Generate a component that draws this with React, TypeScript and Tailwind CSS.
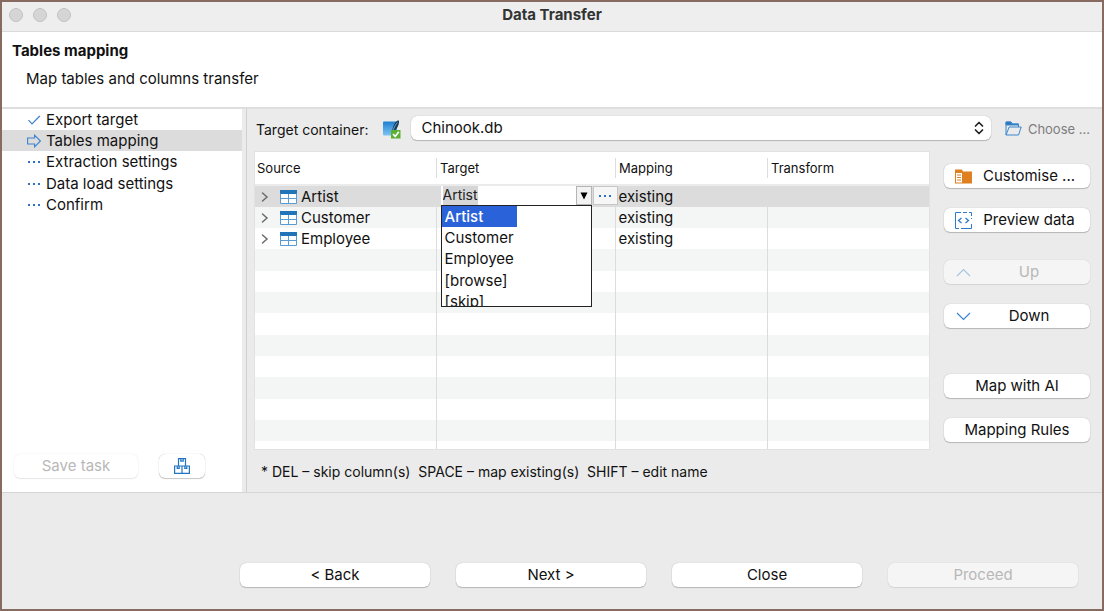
import { useEffect, useRef, type ReactNode } from "react";
import clsx from "clsx";

const steps = [
  { label: "Export target", state: "done" },
  { label: "Tables mapping", state: "current" },
  { label: "Extraction settings", state: "pending" },
  { label: "Data load settings", state: "pending" },
  { label: "Confirm", state: "pending" },
];

const tables = ["Artist", "Customer", "Employee"];
const options = ["Artist", "Customer", "Employee", "[browse]", "[skip]"];
const emptyRows = Array.from({ length: 9 }, (_, i) => i);

function CheckIcon() {
  return (
    <svg width="14" height="14" viewBox="0 0 14 14" fill="none" stroke="#3b82cf" strokeWidth="1.2" aria-hidden="true">
      <path d="M1.5 7.2 5 10.8 12.8 3" />
    </svg>
  );
}

function ArrowIcon() {
  return (
    <svg width="14" height="14" viewBox="0 0 14 14" fill="none" stroke="#3b82cf" strokeWidth="1.1" aria-hidden="true">
      <path d="M.6 4h7V1.2L13.4 7l-5.8 5.8V10h-7z" />
    </svg>
  );
}

function DotsIcon() {
  return (
    <svg width="14" height="14" viewBox="0 0 14 14" fill="#2b72c4" aria-hidden="true">
      <path d="M1 6h2v2H1zM6 6h2v2H6zM11 6h2v2h-2z" />
    </svg>
  );
}

function TableIcon() {
  return (
    <svg width="17" height="14" viewBox="0 0 17 14" aria-hidden="true">
      <path fill="#fff" d="M.5.5h16v13H.5z" />
      <path fill="#2274b9" d="M0 0h17v4H0z" />
      <path fill="none" stroke="#5b9bd3" d="M.5 3.5v10h16v-10M8.500 4v9.500M.5 8.500h16" />
    </svg>
  );
}

function ChevronRight() {
  return (
    <svg width="8" height="12" viewBox="0 0 8 12" fill="none" stroke="#6b6b6b" strokeWidth="1.5" strokeLinecap="round" aria-hidden="true">
      <path d="m1.500 2 4.500 4-4.500 4" />
    </svg>
  );
}

function SqliteIcon() {
  return (
    <svg width="19" height="19" viewBox="0 0 19 19" aria-hidden="true">
      <defs>
        <linearGradient id="db" x1="0" y1="0" x2="0" y2="1">
          <stop offset="0" stopColor="#1c7fd0" />
          <stop offset="1" stopColor="#7fc4f3" />
        </linearGradient>
      </defs>
      <rect x="1" y="1.500" width="14" height="14" rx="1" fill="url(#db)" />
      <path fill="#173a58" d="M16.500.3c1 .7.600 3.700-.7 6.200-1.200 2.400-2.900 4.300-4.500 5.200l-.8 4h-1c.2-5.200 2.300-14 7-15.400z" />
      <path fill="none" stroke="#9bd0f2" strokeWidth=".7" d="M15.500 2.500c-2.200 2.200-4 6-4.800 9.500" />
      <rect x="9" y="10" width="9.500" height="8.500" fill="#5ab031" />
      <path fill="none" stroke="#fff" strokeWidth="1.700" d="m11 14 2.200 2.400 3.600-4.600" />
    </svg>
  );
}

function FolderOpenIcon() {
  return (
    <svg width="17" height="15" viewBox="0 0 17 15" fill="none" stroke="#3b86cc" aria-hidden="true">
      <path d="M1 14V1h5l1 2h6.500v3M1 14l3.200-8h12l-2.700 8z" />
      <path fill="#2a76bd" d="M1 1h5l1 2h6.500v1H1z" />
    </svg>
  );
}

function CustomiseIcon() {
  return (
    <svg width="17" height="15" viewBox="0 0 17 15" aria-hidden="true">
      <path fill="#de801f" d="M0 .5h7l1 2h9v12H0z" />
      <path fill="#fff" d="M1 4h6v9.500H1z" />
      <path stroke="#de801f" d="M2 6h4M2 8.500h4M2 11h4" />
    </svg>
  );
}

function PreviewIcon() {
  return (
    <svg width="17" height="17" viewBox="0 0 17 17" fill="none" stroke="#2f7ac6" aria-hidden="true">
      <path d="M6 .5H.5v16H4M8 .5h4M14 .5h2.500V4M6 16.500h10.500V12M16.500 6v1" />
      <path strokeWidth="1.300" d="M6.500 6 3.500 8.500l3 2.500M10.500 6l3 2.500-3 2.500" />
    </svg>
  );
}

function ChevronIcon({ up = false }: { up?: boolean }) {
  return (
    <svg width="15" height="9" viewBox="0 0 15 9" fill="none" stroke={up ? "#a9c4e0" : "#3b82cf"} strokeWidth="1.2" aria-hidden="true">
      <path d={up ? "M1 8l6.500-6.500L14 8" : "M1 1l6.500 6.500L14 1"} />
    </svg>
  );
}

function BoxesIcon() {
  return (
    <svg width="16" height="16" viewBox="0 0 16 16" fill="none" stroke="#2274c4" strokeWidth="1.200" aria-hidden="true">
      <path d="M4.500 8V.6h7V8M.6 8h14.800v7.400H.6zM8 8v7.400" />
      <path d="M6.800.6v2.600h2.400V.6M3.200 8v2.300h2V8M10.800 8v2.300h2V8" />
    </svg>
  );
}

function PushButton({
  children,
  icon,
  disabled,
  className,
  label,
}: {
  children?: ReactNode;
  icon?: ReactNode;
  disabled?: boolean;
  className?: string;
  label?: string;
}) {
  return (
    <button
      type="button"
      disabled={disabled}
      aria-label={label}
      className={clsx(
        "flex h-6 items-center rounded-md text-[15px] leading-5 whitespace-nowrap",
        disabled
          ? "bg-white/50 text-[#b8b8b8] shadow-[0_0_1px_rgba(0,0,0,0.2),0_1px_1px_rgba(0,0,0,0.08)]"
          : "bg-white text-[#111] shadow-[0_0_1px_rgba(0,0,0,0.3),0_1px_1px_rgba(0,0,0,0.2)]",
        className,
      )}
    >
      {icon && <span className="flex w-[38px] shrink-0 items-center justify-center">{icon}</span>}
      {children && <span className={clsx("flex-1 text-center", icon && "pr-3.5")}>{children}</span>}
    </button>
  );
}

function TargetEditor() {
  const ref = useRef<HTMLInputElement>(null);
  useEffect(() => {
    ref.current?.focus();
    ref.current?.select();
  }, []);
  return (
    <div className="absolute top-0 left-1 z-10">
      <div className="flex h-[19px] w-[178px]">
        <input
          ref={ref}
          aria-label="Target table"
          defaultValue="Artist"
          className="w-[135px] bg-white px-0.5 pb-0.5 text-sm caret-transparent outline-none selection:bg-[#d6d6d6] selection:text-[#222]"
        />
        <button type="button" aria-label="Show targets" className="flex w-4 items-center justify-center border border-[#b5b5b5] bg-[#f2f2f2]">
          <svg width="8" height="8" viewBox="0 0 8 8" aria-hidden="true">
            <path d="M.5.5h7L4 7.500z" />
          </svg>
        </button>
        <button type="button" aria-label="Browse" className="ml-px flex w-[25px] items-center justify-center border border-[#c6c6c6] bg-[#f6f6f6]">
          <DotsIcon />
        </button>
      </div>
      <ul role="listbox" aria-label="Targets" className="h-[102px] w-[151px] overflow-hidden border border-[#222] bg-white">
        {options.map((option, i) => (
          <li
            key={option}
            role="option"
            aria-selected={i === 0}
            className={clsx(
              "h-[21px] px-[3px] text-[15px] leading-[21px] nth-[3n]:h-[22px]",
              i === 0 && "w-[75px] bg-[#2a62d9] font-medium text-white",
            )}
          >
            {option}
          </li>
        ))}
      </ul>
    </div>
  );
}

const cell = "border-l border-[#dcdcdc] p-0 pl-[3px]";

export default function App() {
  return (
    <div className="flex min-h-screen flex-col border-2 border-[#876b60] bg-[#ebebeb] font-['Inter','Liberation_Sans',sans-serif] text-[#111]">
      <header className="relative flex h-[30px] items-center justify-center border-b border-[#dadada] bg-[#eeeeee]">
        <div className="absolute top-[6px] left-[7px] flex gap-2.5">
          <span className="size-3.5 rounded-full border border-[#c2c2c2] bg-[#d5d5d5]" />
          <span className="size-3.5 rounded-full border border-[#c2c2c2] bg-[#d5d5d5]" />
          <span className="size-3.5 rounded-full border border-[#c2c2c2] bg-[#d5d5d5]" />
        </div>
        <h1 className="pb-1 text-[15px] leading-5 font-bold text-[#333]">Data Transfer</h1>
      </header>

      <section className="h-[77px] border-b-2 border-[#dedede] bg-white px-2.5 pt-[9px]">
        <h2 className="text-[15px] leading-5 font-bold">Tables mapping</h2>
        <p className="mt-2 pl-3.5 text-[15px] leading-5">Map tables and columns transfer</p>
      </section>

      <div className="flex">
        <aside className="flex w-60 shrink-0 flex-col bg-white">
          <ol>
            {steps.map((step) => (
              <li
                key={step.label}
                aria-current={step.state === "current" ? "step" : undefined}
                className={clsx(
                  "flex h-[21px] items-center gap-[5px] pl-[25px] text-[15px] leading-5 nth-[3n]:h-[22px]",
                  step.state === "current" && "bg-[#dcdcdc]",
                )}
              >
                {step.state === "done" && <CheckIcon />}
                {step.state === "current" && <ArrowIcon />}
                {step.state === "pending" && <DotsIcon />}
                {step.label}
              </li>
            ))}
          </ol>
          <div className="mt-auto flex gap-[21px] pb-3.5 pl-3">
            <PushButton disabled className="w-[124px]">Save task</PushButton>
            <PushButton label="Tasks" className="w-[46px] justify-center" icon={<BoxesIcon />} />
          </div>
        </aside>
        <div className="w-[5px] shrink-0 border-r border-[#d0d0d0]" />

        <main className="min-w-0 flex-1 pt-1.5 pr-3 pl-[7px]">
          <div className="flex h-[25px] items-center">
            <label htmlFor="container" className="pl-0.5 pt-1 text-sm leading-5">Target container:</label>
            <span className="ml-3.5 pt-1"><SqliteIcon /></span>
            <div className="relative ml-2.5 flex-1">
              <select
                id="container"
                className="h-6 w-full appearance-none rounded-md bg-white pl-2.5 text-[15px] leading-5 shadow-[0_0_1px_rgba(0,0,0,0.3),0_1px_1px_rgba(0,0,0,0.2)] outline-none"
              >
                <option>Chinook.db</option>
              </select>
              <svg className="pointer-events-none absolute top-[6px] right-[7px]" width="10" height="14" viewBox="0 0 10 14" fill="none" stroke="#222" strokeWidth="1.700" strokeLinecap="round" strokeLinejoin="round" aria-hidden="true">
                <path d="M1.500 5 5 1.500 8.500 5M1.500 9 5 12.500 8.500 9" />
              </svg>
            </div>
            <button type="button" className="ml-3.5 flex items-center gap-1.5 pt-0.5 text-[13px] leading-5 whitespace-nowrap text-[#7d7d7d]">
              <FolderOpenIcon />
              Choose ...
            </button>
          </div>

          <div className="mt-[11px] flex gap-3.5">
            <div className="min-w-0 flex-1">
              <div className="h-[299px] border border-[#e2e2e2] bg-white">
                <table className="h-full w-full table-fixed border-collapse text-left">
                  <colgroup>
                    <col className="w-[181px]" />
                    <col className="w-[179px]" />
                    <col className="w-[152px]" />
                    <col />
                  </colgroup>
                  <thead>
                    <tr className="h-[33px] border-b-2 border-[#ebebeb] text-[13px] leading-5">
                      <th className="p-0 pl-0.5 font-normal">Source</th>
                      {["Target", "Mapping", "Transform"].map((name) => (
                        <th key={name} className="p-0 font-normal">
                          <div className="border-l border-[#dcdcdc] pl-[3px]">{name}</div>
                        </th>
                      ))}
                    </tr>
                  </thead>
                  <tbody className="text-[15px] leading-5">
                    {tables.map((name, i) => (
                      <tr key={name} className={clsx("h-[21px] nth-[3n+1]:h-[22px]", i === 0 ? "bg-[#dcdcdc]" : "even:bg-[#f4f5f5]")}>
                        <td className="p-0">
                          <div className="flex items-center pl-1.5">
                            <ChevronRight />
                            <span className="mr-1 ml-[11px]"><TableIcon /></span>
                            {name}
                          </div>
                        </td>
                        <td className={clsx(cell, "relative")}>{i === 0 && <TargetEditor />}</td>
                        <td className={cell}>existing</td>
                        <td className={cell} />
                      </tr>
                    ))}
                    {emptyRows.map((row) => (
                      <tr key={row} className="h-[21px] even:bg-[#f4f5f5] nth-[3n+1]:h-[22px]">
                        <td className="p-0" />
                        <td className={cell} />
                        <td className={cell} />
                        <td className={cell} />
                      </tr>
                    ))}
                    <tr className="h-2">
                      <td className="p-0" />
                      <td className={cell} />
                      <td className={cell} />
                      <td className={cell} />
                    </tr>
                  </tbody>
                </table>
              </div>
              <p className="pt-3 pb-2.5 pl-[7px] text-sm leading-5 whitespace-pre">
                {"* DEL – skip column(s)  SPACE – map existing(s)  SHIFT – edit name"}
              </p>
            </div>

            <div className="flex w-[146px] shrink-0 flex-col pt-[13px]">
              <PushButton icon={<CustomiseIcon />}>Customise ...</PushButton>
              <PushButton icon={<PreviewIcon />} className="mt-5">Preview data</PushButton>
              <PushButton icon={<ChevronIcon up />} disabled className="mt-7">Up</PushButton>
              <PushButton icon={<ChevronIcon />} className="mt-5">Down</PushButton>
              <PushButton className="mt-[46px]">Map with AI</PushButton>
              <PushButton className="mt-5">Mapping Rules</PushButton>
            </div>
          </div>
        </main>
      </div>

      <footer className="flex flex-1 items-end justify-end gap-[26px] border-t border-[#d5d5d5] pr-6 pb-[22px]">
        <PushButton className="w-[190px]">&lt; Back</PushButton>
        <PushButton className="w-[190px]">Next &gt;</PushButton>
        <PushButton className="w-[190px]">Close</PushButton>
        <PushButton disabled className="w-[190px]">Proceed</PushButton>
      </footer>
    </div>
  );
}
